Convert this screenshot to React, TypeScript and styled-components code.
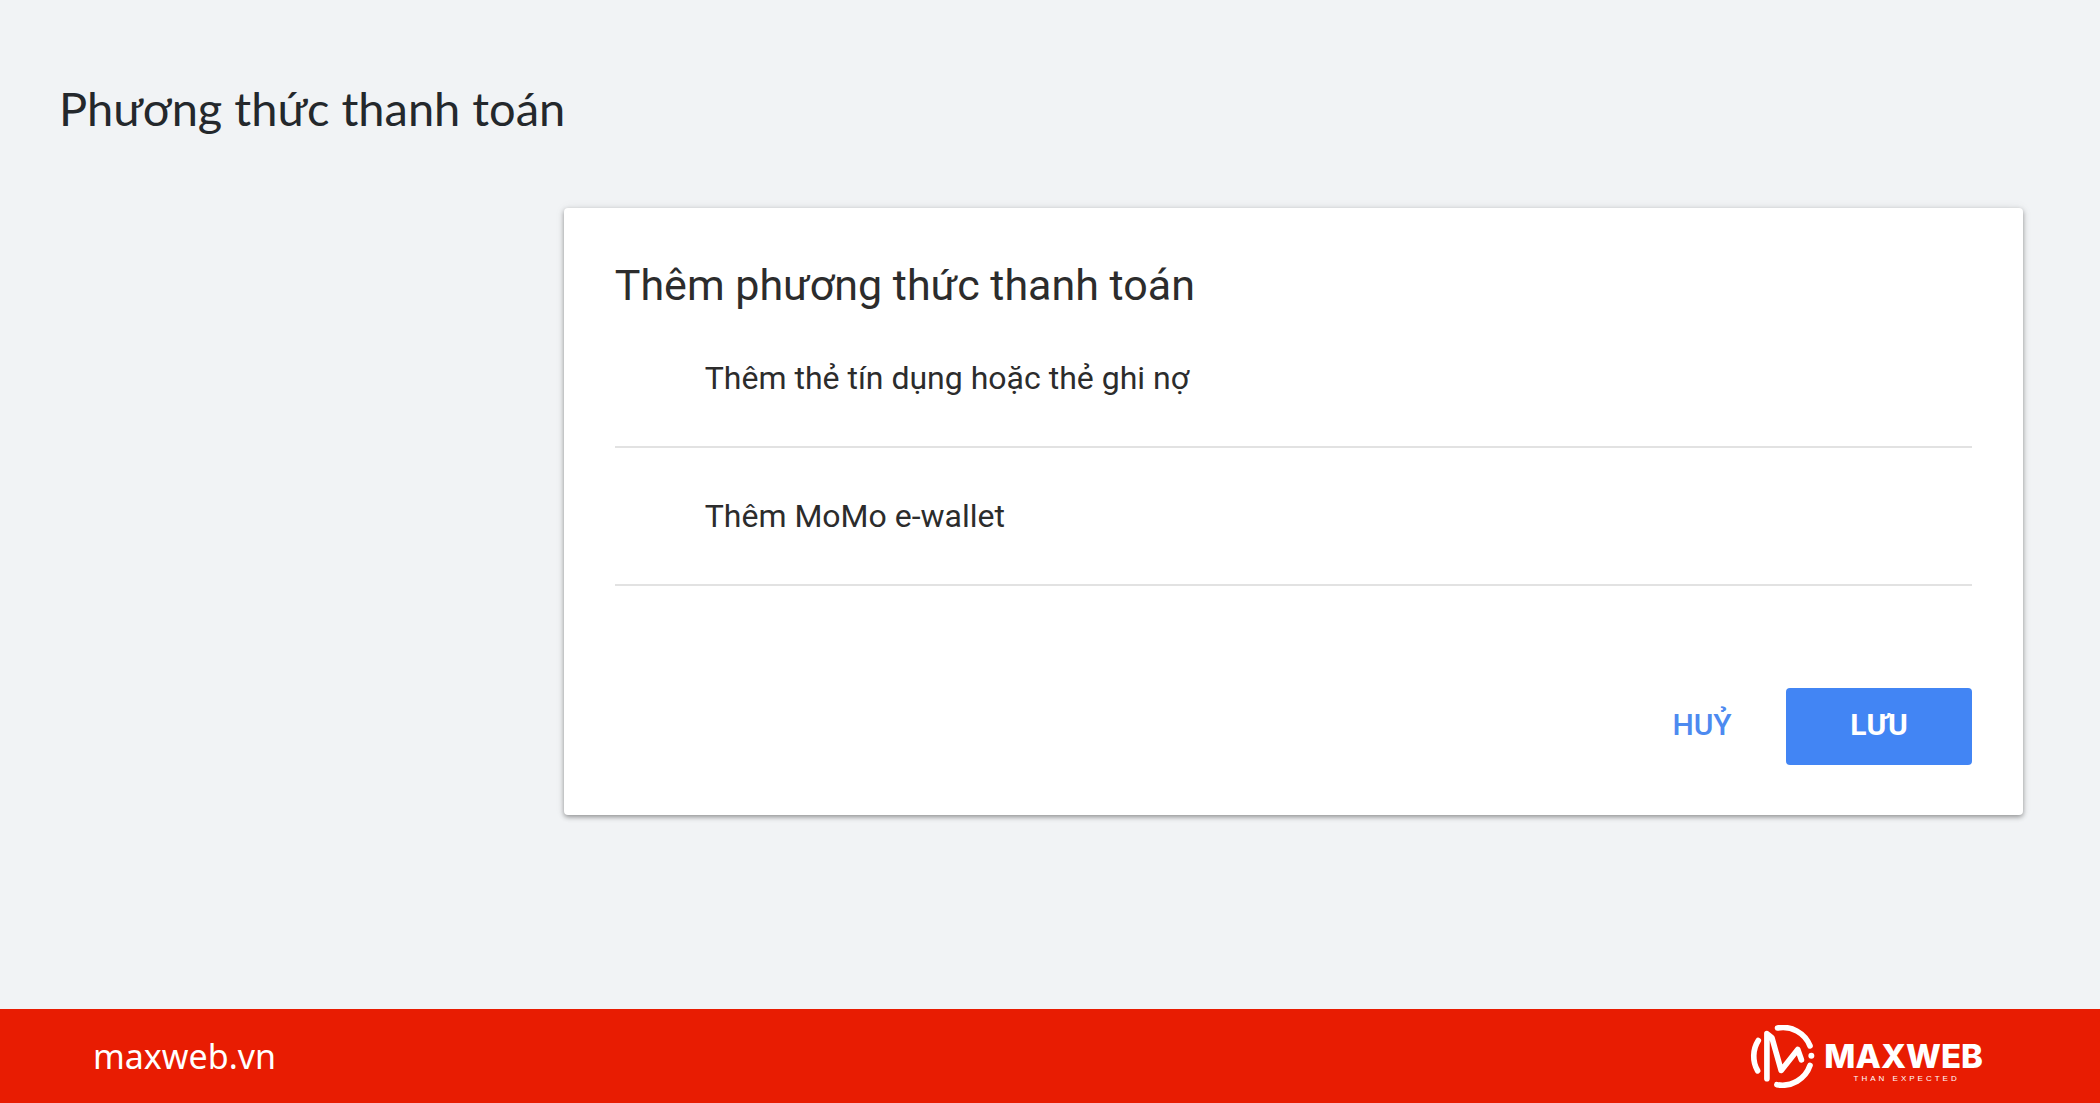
import React from "react";
import styled, { createGlobalStyle } from "styled-components";

const GlobalStyle = createGlobalStyle`
  *, *::before, *::after { box-sizing: border-box; }
  body {
    margin: 0;
    background: #f1f3f5;
    color: #2c2c2c;
    font-family: Roboto, "Noto Sans", sans-serif;
  }
`;

const Page = styled.div`
  display: flex;
  flex-direction: column;
  min-height: 100vh;
`;

const Main = styled.main`
  flex: 1;
  padding: 78px 77px 48px 59px;
`;

const PageTitle = styled.h1`
  margin: 0 0 70px;
  font: 400 47px/60px Lato, "Noto Sans", sans-serif;
  color: #24282c;
`;

const Card = styled.section`
  margin-left: 25.7%;
  padding: 52px 51px 50px;
  background: #fff;
  border-radius: 4px;
  box-shadow: 0 2px 5px rgba(0, 0, 0, 0.38), 0 0 12px rgba(0, 0, 0, 0.06);
`;

const CardTitle = styled.h2`
  margin: 0;
  font-size: 43px;
  line-height: 50px;
  font-weight: 400;
`;

const Methods = styled.ul`
  list-style: none;
  margin: 0;
  padding: 0;
`;

const Method = styled.li`
  border-bottom: 2px solid #e2e2e2;
`;

const MethodButton = styled.button`
  display: block;
  width: 100%;
  padding: 48px 90px;
  border: 0;
  background: none;
  color: inherit;
  font: inherit;
  font-size: 32px;
  line-height: 40px;
  text-align: left;
  cursor: pointer;
`;

const Actions = styled.div`
  display: flex;
  justify-content: flex-end;
  gap: 4px;
  margin-top: 102px;
`;

const ActionButton = styled.button<{ $primary?: boolean }>`
  min-width: ${(p) => (p.$primary ? 186 : 160)}px;
  height: 77px;
  padding: 0 48px 4px;
  border: 0;
  border-radius: 4px;
  background: ${(p) => (p.$primary ? "#4285f4" : "transparent")};
  color: ${(p) => (p.$primary ? "#fff" : "#4d8af0")};
  font: ${(p) => (p.$primary ? 700 : 500)} 30px/36px Roboto, sans-serif;
  text-transform: uppercase;
  cursor: pointer;
`;

const Footer = styled.footer`
  display: flex;
  align-items: center;
  justify-content: space-between;
  height: 94px;
  padding: 0 117px 0 93px;
  background: #e81c02;
  color: #fff;
`;

const SiteLink = styled.a`
  color: inherit;
  text-decoration: none;
  font: 400 34px/40px "Noto Sans", "Open Sans", sans-serif;
`;

const Brand = styled.div`
  display: flex;
  align-items: center;
  gap: 9px;
`;

const BrandText = styled.div`
  display: flex;
  flex-direction: column;
  align-items: center;
  padding-top: 12px;
`;

const BrandName = styled.span`
  font: 800 33px/34px Inter, sans-serif;
`;

const BrandTag = styled.span`
  padding-left: 6px;
  font: 400 8px/12px "Liberation Sans", sans-serif;
  letter-spacing: 3px;
`;

const Mark = () => (
  <svg width="65" height="63" viewBox="60 70 196 190" fill="none" stroke="#fff" strokeWidth="17" strokeLinecap="round" strokeLinejoin="round" aria-hidden="true">
    <path d="M85 117A88 88 0 0 0 83 208" />
    <path d="M143 79A88 88 0 0 1 241 133" />
    <path d="M241 192A88 88 0 0 1 141 250" />
    <path d="M111 232V96L126 108L154 207L204 144L215 175" />
    <circle cx="245" cy="163" r="9" fill="#fff" stroke="none" />
  </svg>
);

export default function App() {
  return (
    <Page>
      <GlobalStyle />
      <Main>
        <PageTitle>Phương thức thanh toán</PageTitle>
        <Card>
          <CardTitle>Thêm phương thức thanh toán</CardTitle>
          <Methods>
            <Method><MethodButton type="button">Thêm thẻ tín dụng hoặc thẻ ghi nợ</MethodButton></Method>
            <Method><MethodButton type="button">Thêm MoMo e-wallet</MethodButton></Method>
          </Methods>
          <Actions>
            <ActionButton type="button">Huỷ</ActionButton>
            <ActionButton type="button" $primary>Lưu</ActionButton>
          </Actions>
        </Card>
      </Main>
      <Footer>
        <SiteLink href="#">maxweb.vn</SiteLink>
        <Brand>
          <Mark />
          <BrandText>
            <BrandName>MAXWEB</BrandName>
            <BrandTag>THAN EXPECTED</BrandTag>
          </BrandText>
        </Brand>
      </Footer>
    </Page>
  );
}
